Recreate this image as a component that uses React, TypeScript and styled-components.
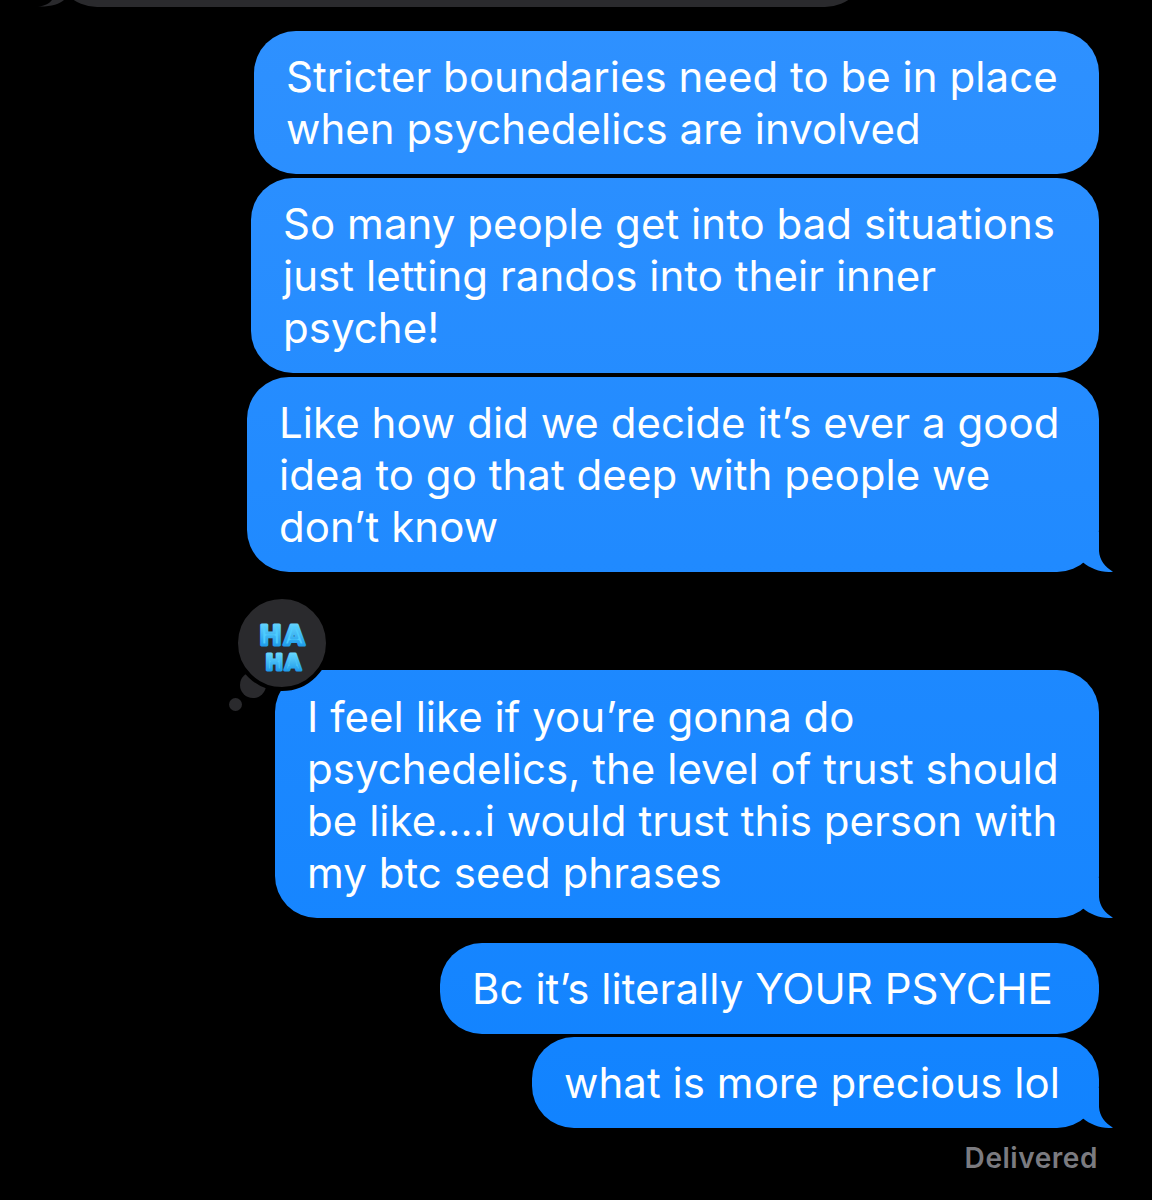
import React from "react";
import styled, { createGlobalStyle } from "styled-components";

const Global = createGlobalStyle`
  html, body { margin: 0; padding: 0; background: #000; }
  body { font-family: Inter, "Liberation Sans", sans-serif; }
`;

const blueFill = "linear-gradient(180deg, #2f91ff 0px, #0f82ff 1200px) fixed";

const Page = styled.main`
  width: 1152px;
  height: 1200px;
  overflow: hidden;
  background: #000;
  display: flex;
  flex-direction: column;
  align-items: flex-end;
  padding-right: 53px;
  box-sizing: border-box;
`;

const IncomingShape = styled.div`
  height: 7px;
  width: 100%;
  overflow: hidden;
  flex: none;
`;

const IncomingBody = styled.div`
  position: relative;
  width: 812px;
  height: 84px;
  margin-top: -77px;
  margin-left: 55px;
  background: #2a2a2d;
  border-radius: 42px;
`;

const IncomingTail = styled.svg`
  position: absolute;
  left: -20px;
  bottom: 0;
`;

const Bubble = styled.div<{ $w: number; $top: number; $pt?: number }>`
  position: relative;
  box-sizing: border-box;
  width: ${(p) => p.$w}px;
  margin-top: ${(p) => p.$top}px;
  padding: ${(p) => p.$pt ?? 20}px 0 19px 32px;
  border-radius: 42px;
  background: ${blueFill};
  color: #fff;
  font-size: 42px;
  line-height: 52px;
  letter-spacing: 0.04px;
  font-weight: 375;
  white-space: nowrap;
`;

const Tail = styled.div`
  position: absolute;
  right: -14px;
  bottom: 0;
  width: 31px;
  height: 40px;
  background: ${blueFill};
  clip-path: path("M0 0 L17 0 L17 19 C17.5 28 23 35 31 39.7 C20 41 9 37 0.5 30 Z");
`;

const Delivered = styled.div`
  margin-top: 14px;
  margin-right: 1px;
  font-size: 28px;
  line-height: 32px;
  letter-spacing: 0.55px;
  font-weight: 600;
  color: #7b7b80;
`;

const Reaction = styled.div`
  position: absolute;
  left: -41px;
  top: -75px;
  width: 88px;
  height: 88px;
  border: 4px solid #000;
  border-radius: 50%;
  background: #2a2a2d;
  z-index: 1;
`;

const Puff = styled.div`
  position: absolute;
  border-radius: 50%;
  background: #2a2a2d;
`;

const PuffLarge = styled(Puff)`
  left: -35px;
  top: 2px;
  width: 26px;
  height: 26px;
`;

const PuffSmall = styled(Puff)`
  left: -46px;
  top: 28px;
  width: 13px;
  height: 13px;
`;

const HaArt = styled.svg`
  display: block;
`;

const HaText = styled.text<{ $gap: number }>`
  font-family: "DejaVu Sans", sans-serif;
  font-weight: 700;
  letter-spacing: ${(p) => p.$gap}px;
  stroke-linejoin: round;
  stroke-linecap: round;
  text-anchor: middle;
`;

export default function App() {
  return (
    <Page>
      <Global />
      <IncomingShape>
        <IncomingBody>
          <IncomingTail width="40" height="7" viewBox="0 0 40 7" aria-hidden="true">
            <path d="M3 6.5 C10 6 15 3 17 0 L29 0 C25 4 15 7 3 6.5 Z" fill="#2a2a2d" />
          </IncomingTail>
        </IncomingBody>
      </IncomingShape>
      <Bubble $w={845} $top={24}>
        Stricter boundaries need to be in place
        <br />
        when psychedelics are involved
      </Bubble>
      <Bubble $w={848} $top={4}>
        So many people get into bad situations
        <br />
        just letting randos into their inner
        <br />
        psyche!
      </Bubble>
      <Bubble $w={852} $top={4}>
        Like how did we decide it’s ever a good
        <br />
        idea to go that deep with people we
        <br />
        don’t know
        <Tail />
      </Bubble>
      <Bubble $w={824} $top={98} $pt={21}>
        <Reaction>
          <HaArt width="88" height="88" viewBox="0 0 88 88" aria-hidden="true">
            <defs>
              <linearGradient id="puffy" x1="0" y1="0" x2="0" y2="1">
                <stop offset="0" stopColor="#6fdcff" />
                <stop offset="1" stopColor="#0f8fe6" />
              </linearGradient>
            </defs>
            <HaText $gap={2} x="45" y="46" fontSize="27" fill="#4ccdff" stroke="url(#puffy)" strokeWidth="3">
              HA
            </HaText>
            <HaText $gap={1.5} x="46" y="71" fontSize="21" fill="#4ccdff" stroke="url(#puffy)" strokeWidth="3">
              HA
            </HaText>
          </HaArt>
        </Reaction>
        <PuffLarge />
        <PuffSmall />
        I feel like if you’re gonna do
        <br />
        psychedelics, the level of trust should
        <br />
        be like....i would trust this person with
        <br />
        my btc seed phrases
        <Tail />
      </Bubble>
      <Bubble $w={659} $top={25}>
        Bc it’s literally YOUR PSYCHE
      </Bubble>
      <Bubble $w={567} $top={3}>
        what is more precious lol
        <Tail />
      </Bubble>
      <Delivered>Delivered</Delivered>
    </Page>
  );
}
